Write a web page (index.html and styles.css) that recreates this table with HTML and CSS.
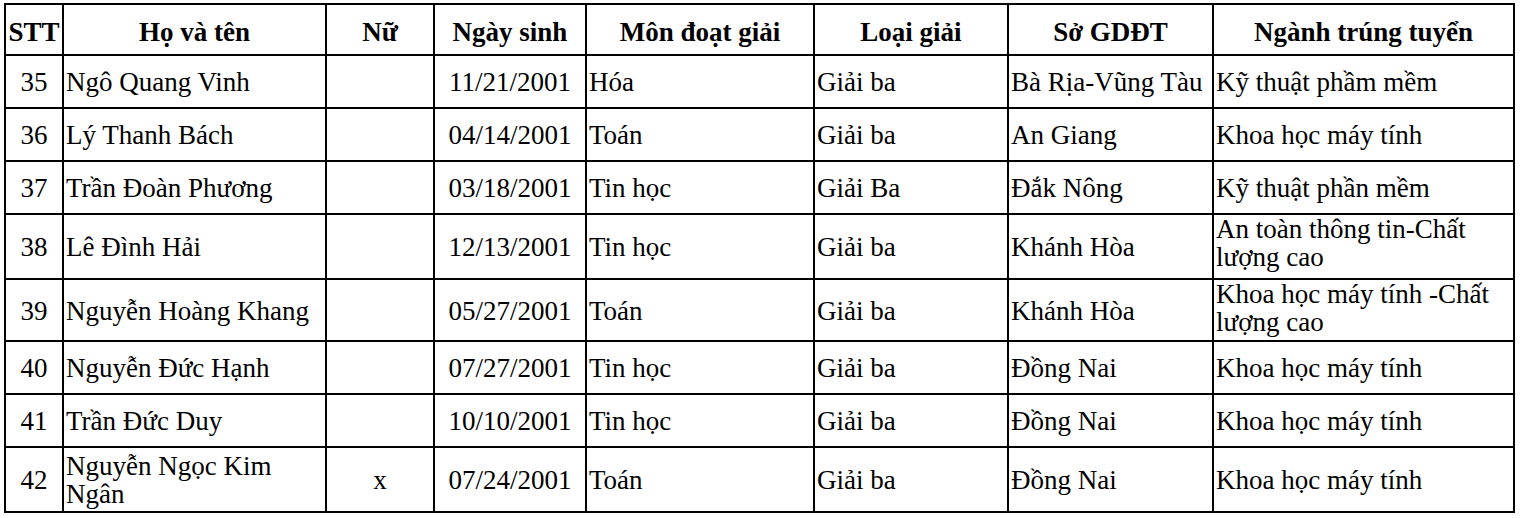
FILE: index.html
```html
<!DOCTYPE html>
<html lang="vi">
<head>
<meta charset="utf-8">
<title>Danh sách</title>
<link rel="stylesheet" href="styles.css">
</head>
<body>
<div class="page">
<table class="sheet">
  <colgroup>
    <col class="c-stt"><col class="c-name"><col class="c-nu"><col class="c-date">
    <col class="c-mon"><col class="c-loai"><col class="c-so"><col class="c-nganh">
  </colgroup>
  <thead>
    <tr class="r-head">
      <th>STT</th><th>Họ và tên</th><th>Nữ</th><th>Ngày sinh</th>
      <th>Môn đoạt giải</th><th>Loại giải</th><th>Sở GDĐT</th><th>Ngành trúng tuyển</th>
    </tr>
  </thead>
  <tbody>
    <tr class="r">
      <td class="ctr">35</td><td>Ngô Quang Vinh</td><td class="ctr"></td><td class="ctr">11/21/2001</td>
      <td>Hóa</td><td>Giải ba</td><td>Bà Rịa-Vũng Tàu</td><td>Kỹ thuật phầm mềm</td>
    </tr>
    <tr class="r">
      <td class="ctr">36</td><td>Lý Thanh Bách</td><td class="ctr"></td><td class="ctr">04/14/2001</td>
      <td>Toán</td><td>Giải ba</td><td>An Giang</td><td>Khoa học máy tính</td>
    </tr>
    <tr class="r">
      <td class="ctr">37</td><td>Trần Đoàn Phương</td><td class="ctr"></td><td class="ctr">03/18/2001</td>
      <td>Tin học</td><td>Giải Ba</td><td>Đắk Nông</td><td>Kỹ thuật phần mềm</td>
    </tr>
    <tr class="r-tall">
      <td class="ctr">38</td><td>Lê Đình Hải</td><td class="ctr"></td><td class="ctr">12/13/2001</td>
      <td>Tin học</td><td>Giải ba</td><td>Khánh Hòa</td><td class="wrap">An toàn thông tin-Chất lượng cao</td>
    </tr>
    <tr class="r-mid">
      <td class="ctr">39</td><td>Nguyễn Hoàng Khang</td><td class="ctr"></td><td class="ctr">05/27/2001</td>
      <td>Toán</td><td>Giải ba</td><td>Khánh Hòa</td><td class="wrap">Khoa học máy tính -Chất lượng cao</td>
    </tr>
    <tr class="r">
      <td class="ctr">40</td><td>Nguyễn Đức Hạnh</td><td class="ctr"></td><td class="ctr">07/27/2001</td>
      <td>Tin học</td><td>Giải ba</td><td>Đồng Nai</td><td>Khoa học máy tính</td>
    </tr>
    <tr class="r">
      <td class="ctr">41</td><td>Trần Đức Duy</td><td class="ctr"></td><td class="ctr">10/10/2001</td>
      <td>Tin học</td><td>Giải ba</td><td>Đồng Nai</td><td>Khoa học máy tính</td>
    </tr>
    <tr class="r-tall">
      <td class="ctr">42</td><td class="wrap wrap-low">Nguyễn Ngọc Kim Ngân</td><td class="ctr">x</td><td class="ctr">07/24/2001</td>
      <td>Toán</td><td>Giải ba</td><td>Đồng Nai</td><td>Khoa học máy tính</td>
    </tr>
  </tbody>
</table>
</div>
</body>
</html>
```

FILE: styles.css
```css
html, body {
  margin: 0;
  padding: 0;
  background: #fff;
}

.page {
  padding: 3px 0 0 4px;
}

.sheet {
  border-collapse: collapse;
  table-layout: fixed;
  font-family: "Liberation Serif", "Times New Roman", serif;
  font-size: 27px;
  line-height: 27px;
  color: #000;
}

.c-stt { width: 58px; }
.c-name { width: 263px; }
.c-nu { width: 108px; }
.c-date { width: 152px; }
.c-mon { width: 228px; }
.c-loai { width: 194px; }
.c-so { width: 205px; }
.c-nganh { width: 301px; }

.sheet th,
.sheet td {
  border: 2px solid #000;
  padding: 2px 0 0 2px;
  vertical-align: middle;
  white-space: nowrap;
  overflow: hidden;
  text-align: left;
}

.sheet th {
  font-weight: bold;
  text-align: center;
  padding: 6px 0 0 0;
}

.sheet td.ctr {
  text-align: center;
  padding-left: 0;
}

.sheet td.wrap {
  white-space: normal;
  vertical-align: top;
  padding-top: 0;
  line-height: 28px;
}

.sheet td.wrap-low {
  padding-top: 4px;
}

.r-head { height: 51px; }
.r { height: 53px; }
.r-tall { height: 65px; }
.r-mid { height: 62px; }
```
